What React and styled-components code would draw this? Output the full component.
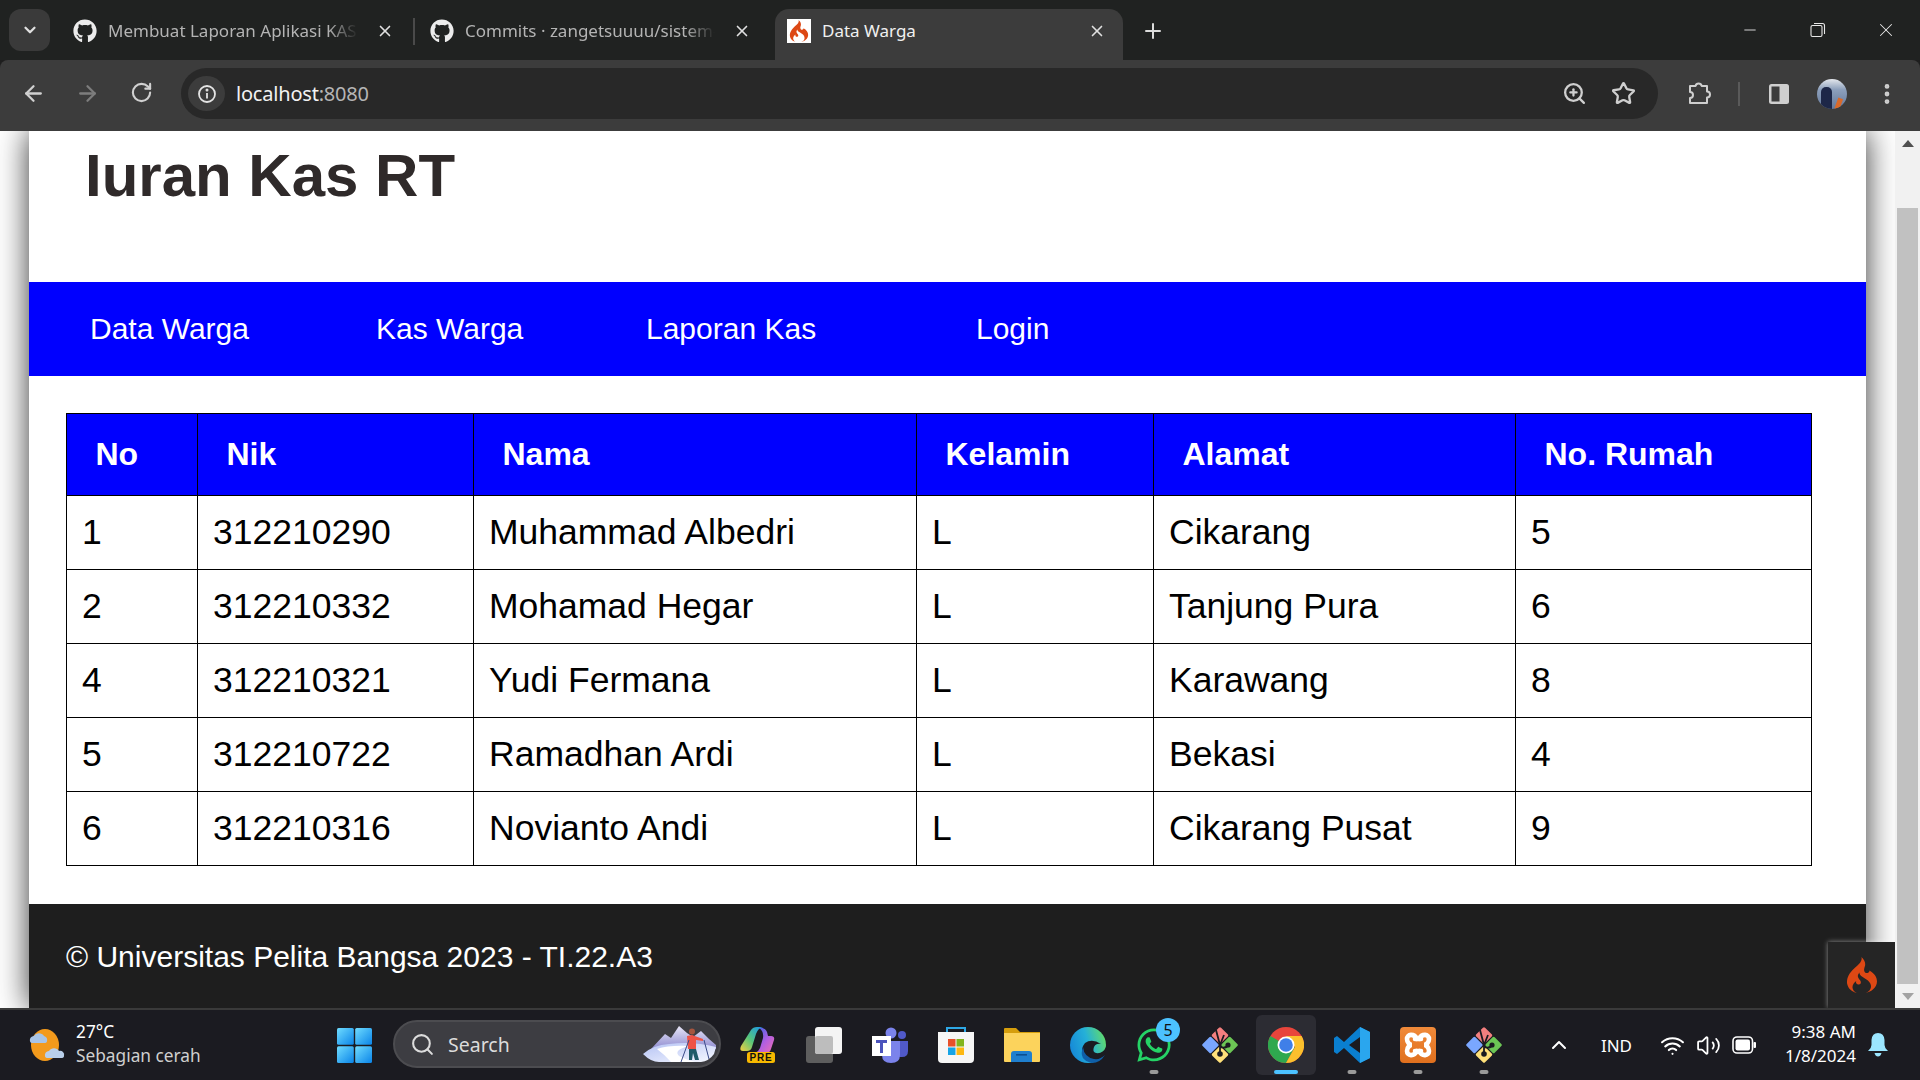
import styled, { createGlobalStyle } from "styled-components";
import { ArrowLeft, ArrowRight, RotateCw, ZoomIn, Star, ChevronDown, ChevronUp, X, Plus, Minus, Search, Wifi, Volume2, EllipsisVertical } from "lucide-react";
import { FaGithub, FaWhatsapp } from "react-icons/fa";
import { SiCodeigniter } from "react-icons/si";

const GlobalStyle = createGlobalStyle`
  html, body {
    margin: 0;
    padding: 0;
    width: 1920px;
    height: 1080px;
    overflow: hidden;
    background: #1e1e1e;
  }
  * {
    box-sizing: border-box;
  }
`;

const chromeFont = `"Noto Sans", "Open Sans", sans-serif`;
const pageFont = `"Liberation Sans", Arial, sans-serif`;

const Screen = styled.div`
  width: 1920px;
  height: 1080px;
  display: flex;
  flex-direction: column;
  overflow: hidden;
`;

/* browser tab strip */
const TabStrip = styled.div`
  height: 60px;
  flex: none;
  background: #202221;
  display: flex;
  align-items: flex-end;
  padding-left: 9px;
  font-family: ${chromeFont};
`;

const TabSearchButton = styled.div`
  width: 41px;
  height: 42px;
  margin-bottom: 9px;
  margin-right: 13px;
  border-radius: 12px;
  background: #3a3a3a;
  color: #e0e0e0;
  display: flex;
  align-items: center;
  justify-content: center;
`;

const Tab = styled.div`
  width: ${(p) => p.$width}px;
  height: 51px;
  flex: none;
  display: flex;
  align-items: center;
  padding: 0 ${(p) => p.$padRight}px 8px ${(p) => p.$pad}px;
  gap: 11px;
  color: ${(p) => (p.$active ? "#f0f0f0" : "#b4b4b4")};
  background: ${(p) => (p.$active ? "#3c3c3c" : "transparent")};
  border-radius: ${(p) => (p.$active ? "14px 14px 0 0" : "0")};
`;

const TabDivider = styled.div`
  width: 2px;
  height: 27px;
  flex: none;
  align-self: flex-start;
  margin-top: 18px;
  background: #4a4a4a;
`;

const TabIcon = styled.div`
  width: 24px;
  height: 24px;
  flex: none;
  display: flex;
  align-items: center;
  justify-content: center;
  color: #ececec;
  background: ${(p) => (p.$light ? "#fff" : "transparent")};
`;

const TabTitle = styled.div`
  flex: 1;
  min-width: 0;
  font-size: 17px;
  white-space: nowrap;
  -webkit-mask-image: ${(p) =>
    p.$active ? "none" : "linear-gradient(to right, #000 calc(100% - 44px), transparent calc(100% - 14px))"};
`;

const TabClose = styled(X)`
  flex: none;
  color: #e0e0e0;
  margin-left: -7px;
`;

const NewTab = styled.div`
  height: 51px;
  width: 40px;
  margin-left: 10px;
  padding-bottom: 8px;
  color: #dcdcdc;
  display: flex;
  align-items: center;
  justify-content: center;
`;

const WindowControls = styled.div`
  margin-left: auto;
  height: 60px;
  display: flex;
  align-items: center;
  color: #e8e8e8;
`;

const WindowButton = styled.div`
  width: 68px;
  display: flex;
  justify-content: center;
`;

/* browser toolbar */
const Toolbar = styled.div`
  height: 71px;
  flex: none;
  background: #3c3c3c;
  border-radius: 8px 8px 0 0;
  display: flex;
  align-items: center;
  padding: 0 0 4px 0;
  color: #cfcfcf;
  font-family: ${chromeFont};
`;

const NavButton = styled.div`
  width: 54px;
  flex: none;
  display: flex;
  justify-content: center;
  color: ${(p) => (p.$muted ? "#7d7d7d" : "#d0d0d0")};
`;

const NavGroup = styled.div`
  display: flex;
  padding-left: 6px;
  width: 181px;
  flex: none;
`;

const AddressBar = styled.div`
  width: 1477px;
  height: 51px;
  flex: none;
  background: #282828;
  border-radius: 26px;
  display: flex;
  align-items: center;
  padding: 0 22px 0 7px;
`;

const SiteInfo = styled.div`
  width: 37px;
  height: 35px;
  flex: none;
  border-radius: 50%;
  background: #3c3c3c;
  color: #e4e4e4;
  display: flex;
  align-items: center;
  justify-content: center;
  margin-right: 11px;
`;

const Url = styled.div`
  flex: 1;
  font-size: 20px;
  letter-spacing: -0.2px;
  color: #e6e6e6;
`;

const Host = styled.span`
  color: #f2f2f2;
`;

const Port = styled.span`
  color: #b5b5b5;
`;

const BarIcons = styled.div`
  display: flex;
  align-items: center;
  gap: 24px;
  color: #cfcfcf;
`;

const ToolIcons = styled.div`
  display: flex;
  align-items: center;
  padding-left: 29px;
  color: #cfcfcf;
`;

const ToolDivider = styled.div`
  width: 2px;
  height: 24px;
  background: #5a5a5a;
  margin: 0 28px 0 26px;
`;

const Avatar = styled.div`
  width: 30px;
  height: 30px;
  border-radius: 50%;
  margin: 0 27px 0 27px;
  background: linear-gradient(180deg, #e4e7ec 0%, #8da0bc 35%, #64789a 100%);
  position: relative;
  overflow: hidden;
`;

const AvatarFigure = styled.div`
  position: absolute;
  left: 4px;
  top: 8px;
  width: 11px;
  height: 24px;
  border-radius: 5px 5px 0 0;
  background: #1d2748;
`;

const AvatarStripe = styled.div`
  position: absolute;
  right: 6px;
  bottom: -2px;
  width: 5px;
  height: 13px;
  background: #d9692a;
  transform: rotate(20deg);
`;

/* page area */
const Viewport = styled.div`
  flex: 1;
  min-height: 0;
  display: flex;
  position: relative;
  background: #fff;
`;

const Gutter = styled.div`
  flex: 1;
  min-width: 0;
  padding-left: 29px;
  padding-right: 29px;
  overflow: hidden;
`;

const Page = styled.div`
  height: 100%;
  background: #fff;
  box-shadow: 0 0 30px rgba(0, 0, 0, 0.8);
  display: flex;
  flex-direction: column;
  font-family: ${pageFont};
`;

const PageHeader = styled.header`
  height: 151px;
  flex: none;
  padding-left: 56px;
`;

const Title = styled.h1`
  margin: 0;
  padding-top: 4px;
  font-size: 60px;
  line-height: 82px;
  font-weight: 700;
  color: #2f2a2a;
`;

const Nav = styled.nav`
  height: 94px;
  flex: none;
  background: #0000ff;
  display: flex;
  align-items: center;
  padding-left: 61px;
`;

const NavLink = styled.a`
  width: ${(p) => p.$width}px;
  flex: none;
  color: #fff;
  font-size: 30px;
`;

const Content = styled.main`
  flex: none;
  padding: 37px 55px 38px 37px;
`;

const Table = styled.table`
  width: 1745px;
  border-collapse: collapse;
  table-layout: fixed;
  border: 1px solid #000;
`;

const HeadCell = styled.th`
  height: 82px;
  padding: 0 0 0 28.5px;
  text-align: left;
  background: #0000ff;
  color: #fff;
  font-size: 32px;
  font-weight: 700;
  border: 1px solid #000;
`;

const Cell = styled.td`
  height: 74px;
  padding: 0 0 1px 15px;
  color: #000;
  font-size: 35.5px;
  border: 1px solid #000;
`;

const Footer = styled.footer`
  flex: 1;
  background: #1e1e1e;
  color: #fff;
  font-size: 30px;
  padding: 36px 0 0 37px;
`;

const CiBadge = styled.div`
  position: absolute;
  right: 25px;
  bottom: 0;
  width: 67px;
  height: 66px;
  background: #252525;
  box-shadow: 0 0 5px rgba(255, 255, 255, 0.5);
  display: flex;
  align-items: center;
  justify-content: center;
  color: #dd4814;
`;

const Scrollbar = styled.div`
  width: 25px;
  flex: none;
  background: #f1f1f1;
  display: flex;
  flex-direction: column;
  align-items: center;
`;

const ScrollArrow = styled.div`
  height: 24px;
  flex: none;
  display: flex;
  align-items: center;
  justify-content: center;
`;

const ScrollTrack = styled.div`
  flex: 1;
  width: 100%;
  padding: 53px 2px 0;
  display: flex;
`;

const ScrollThumb = styled.div`
  flex: 1;
  background: #c1c1c1;
`;

const Triangle = styled.div`
  width: 0;
  height: 0;
  border-left: 6px solid transparent;
  border-right: 6px solid transparent;
  border-${(p) => (p.$up ? "bottom" : "top")}: 7px solid ${(p) => (p.$up ? "#505050" : "#a3a3a3")};
`;

/* windows taskbar */
const Taskbar = styled.div`
  height: 72px;
  flex: none;
  background: #1b1b21;
  border-top: 2px solid #3a3a3a;
  display: flex;
  align-items: center;
  color: #fff;
  font-family: ${chromeFont};
  position: relative;
`;

const Weather = styled.div`
  width: 337px;
  flex: none;
  display: flex;
  align-items: center;
  padding-left: 29px;
  gap: 11px;
`;

const WeatherText = styled.div`
  display: flex;
  flex-direction: column;
  font-size: 17.3px;
  line-height: 24px;
  margin-top: -3px;
`;

const WeatherSub = styled.span`
  color: #cfcfcf;
`;

const StartButton = styled.div`
  width: 56px;
  flex: none;
  display: flex;
`;

const SearchPill = styled.div`
  width: 328px;
  height: 48px;
  flex: none;
  margin-top: -2px;
  background: #3d3d42;
  border: 2px solid #4c4c50;
  border-radius: 24px;
  display: flex;
  align-items: center;
  padding: 0 3px 0 15px;
  gap: 13px;
  color: #dcdcdc;
  font-size: 19.5px;
`;

const SearchLabel = styled.span`
  flex: 1;
`;

const Dock = styled.div`
  display: flex;
  margin-left: 4px;
  height: 100%;
`;

const DockSlot = styled.div`
  width: 66px;
  flex: none;
  display: flex;
  align-items: center;
  justify-content: center;
  padding: 0 3px;
`;

const DockTile = styled.div`
  width: 60px;
  height: 60px;
  display: flex;
  align-items: center;
  justify-content: center;
  position: relative;
  border-radius: 6px;
  background: ${(p) => (p.$active ? "#2c2c33" : "transparent")};
`;

const DockDot = styled.div`
  position: absolute;
  bottom: 1px;
  left: 50%;
  transform: translateX(-50%);
  width: ${(p) => (p.$active ? 24 : 9)}px;
  height: 4px;
  border-radius: 2px;
  background: ${(p) => (p.$active ? "#4cc2ff" : "#9a9a9a")};
`;

const CountBadge = styled.div`
  position: absolute;
  top: 3px;
  right: 4px;
  width: 24px;
  height: 24px;
  border-radius: 50%;
  background: #4cc2ff;
  color: #111;
  font-size: 16px;
  display: flex;
  align-items: center;
  justify-content: center;
`;

const Tray = styled.div`
  margin-left: auto;
  display: flex;
  align-items: center;
  padding-right: 32px;
`;

const TrayChevron = styled.div`
  display: flex;
  margin-right: 30px;
`;

const Lang = styled.div`
  font-size: 17px;
  margin-right: 28px;
`;

const TrayIcons = styled.div`
  display: flex;
  align-items: center;
  gap: 11px;
  margin-right: 29px;
`;

const Clock = styled.div`
  display: flex;
  flex-direction: column;
  align-items: flex-end;
  font-size: 17px;
  line-height: 24px;
  margin-top: -3px;
  margin-right: 12px;
`;

const Flame = () => <SiCodeigniter size={22} color="#dd4814" />;

const WindowsLogo = () => (
  <svg width="35" height="35" viewBox="0 0 35 35">
    <defs>
      <linearGradient id="win" x1="0" y1="0" x2="1" y2="1">
        <stop offset="0" stopColor="#6fdcff" />
        <stop offset="1" stopColor="#0a84e8" />
      </linearGradient>
    </defs>
    <rect x="0" y="0" width="16.8" height="16.8" rx="1.5" fill="url(#win)" />
    <rect x="18.2" y="0" width="16.8" height="16.8" rx="1.5" fill="url(#win)" />
    <rect x="0" y="18.2" width="16.8" height="16.8" rx="1.5" fill="url(#win)" />
    <rect x="18.2" y="18.2" width="16.8" height="16.8" rx="1.5" fill="url(#win)" />
  </svg>
);

const WeatherIcon = () => (
  <svg width="36" height="34" viewBox="0 0 36 34">
    <ellipse cx="16" cy="17" rx="14" ry="16" fill="#f39a1c" />
    <path d="M1 13 a4 4 0 0 1 4-5 a6 6 0 0 1 10 0 a4 4 0 0 1 3 5 q0 2-3 2 H4 q-3 0-3-2z" fill="#a8c4e6" />
    <path d="M16 28 a4 4 0 0 1 4-5 a6 6 0 0 1 10 0 a4 4 0 0 1 5 5 q0 2-3 2 H19 q-3 0-3-2z" fill="#b9cfea" />
  </svg>
);

const SkierArt = () => (
  <svg width="73" height="38" viewBox="0 0 73 38">
    <defs>
      <linearGradient id="peak" x1="0" y1="0" x2="0" y2="1">
        <stop offset="0" stopColor="#e8e6f8" />
        <stop offset="1" stopColor="#8f8cd0" />
      </linearGradient>
      <linearGradient id="snow" x1="0" y1="0" x2="1" y2="1">
        <stop offset="0" stopColor="#b4c2f4" />
        <stop offset="1" stopColor="#f6f8ff" />
      </linearGradient>
    </defs>
    <path d="M8 24 L22 9 L28 13 L36 1 L44 8 L50 12 L58 6 L66 14 L73 20 V24z" fill="url(#peak)" />
    <path d="M0 29 Q10 20 26 19 Q50 16 73 22 L71 29 Q66 36 58 37 H16 Q8 37 0 29z" fill="url(#snow)" />
    <path d="M14 24 Q26 20 46 21 Q30 25 36 31 Q44 35 52 37 H28 Q22 30 14 24z" fill="#fff" />
    <path d="M44 11 l5-1 l11 4 l0 2 l-7-1 l0 9 h-8z" fill="#ee5347" />
    <circle cx="49" cy="6.5" r="3" fill="#a5553f" />
    <path d="M46 24 h7 l3 11 h-4 l-2-7 l-1 7 h-3z" fill="#1e5a68" />
    <path d="M46 15 L38 37 M61 15 L66 34" stroke="#3a4a88" strokeWidth="1" fill="none" />
  </svg>
);

const CopilotIcon = () => (
  <svg width="36" height="36" viewBox="0 0 36 36">
    <defs>
      <linearGradient id="cpa" x1="0" y1="1" x2="1" y2="0">
        <stop offset="0" stopColor="#f5d040" />
        <stop offset="0.45" stopColor="#58c67a" />
        <stop offset="1" stopColor="#1796ee" />
      </linearGradient>
      <linearGradient id="cpb" x1="0" y1="0" x2="1" y2="1">
        <stop offset="0" stopColor="#2f66e6" />
        <stop offset="0.55" stopColor="#b45fe0" />
        <stop offset="1" stopColor="#f070b0" />
      </linearGradient>
    </defs>
    <path d="M11 3 Q13 0 17 0 H23 Q18 1 16 7 L12 20 Q11 24 7 24 H3 Q-1 24 1 19 z" fill="url(#cpa)" />
    <path d="M19 1 Q25 0 27 5 L28 9 H31 Q35 9 34 13 L31 22 Q30 26 26 26 H15 Q19 24 20 21 L23 11 Q24 4 19 1z" fill="url(#cpb)" />
    <rect x="7" y="25" width="28" height="11" rx="2.5" fill="#f7b900" />
    <text x="21" y="34.2" textAnchor="middle" fontSize="10" letterSpacing="0.8" fontWeight="700" fill="#111" fontFamily="Liberation Sans">PRE</text>
  </svg>
);

const TaskViewIcon = () => (
  <svg width="36" height="36" viewBox="0 0 36 36">
    <rect x="0" y="9" width="27" height="27" rx="3" fill="#5e5e5e" />
    <rect x="9" y="0" width="27" height="27" rx="3" fill="#f4f4f4" />
    <rect x="9" y="9" width="18" height="18" rx="2" fill="#bdbdbd" />
  </svg>
);

const TeamsIcon = () => (
  <svg width="36" height="36" viewBox="0 0 36 36">
    <circle cx="19" cy="6" r="5.5" fill="#7b83eb" />
    <circle cx="30" cy="8" r="4" fill="#5059c9" />
    <path d="M26 14 h10 v10 q0 6-6 6 l-4 0z" fill="#5059c9" />
    <path d="M10 14 h18 v14 q0 8-9 8 q-9 0-9-8z" fill="#7b83eb" />
    <rect x="0" y="9" width="19" height="20" fill="#fff" />
    <path d="M4 13 h11 v3 h-4 v10 h-3 v-10 h-4z" fill="#4b53bc" />
  </svg>
);

const StoreIcon = () => (
  <svg width="36" height="36" viewBox="0 0 36 36">
    <path d="M9 8 V1 h18 v7" fill="none" stroke="#2ea8e6" strokeWidth="2" />
    <path d="M0 5 h36 v27 q0 4-4 4 H4 q-4 0-4-4z" fill="#f6f6f6" />
    <rect x="10" y="12" width="7.5" height="7.5" fill="#e8502a" />
    <rect x="18.5" y="12" width="7.5" height="7.5" fill="#82b51e" />
    <rect x="10" y="20.5" width="7.5" height="7.5" fill="#16a4e6" />
    <rect x="18.5" y="20.5" width="7.5" height="7.5" fill="#fdb812" />
  </svg>
);

const FolderIcon = () => (
  <svg width="36" height="36" viewBox="0 0 36 36">
    <path d="M0 2 q0-1 1-1 h11 l4 4 h20 v6 H0z" fill="#d69e0c" />
    <path d="M0 6 h36 v28 q0 1-1 1 H1 q-1 0-1-1z" fill="#fcd35c" />
    <path d="M7 35 v-8 q0-3 3-3 h15 q3 0 3 3 v8z" fill="#1f7fce" />
    <rect x="12" y="27" width="11" height="1.6" fill="#0c4f90" />
  </svg>
);

const EdgeIcon = () => (
  <svg width="36" height="36" viewBox="0 0 36 36">
    <defs>
      <linearGradient id="edgeA" x1="0" y1="0.6" x2="1" y2="0.3">
        <stop offset="0" stopColor="#1689d8" />
        <stop offset="0.5" stopColor="#25b0d8" />
        <stop offset="1" stopColor="#62dc6a" />
      </linearGradient>
    </defs>
    <circle cx="18" cy="18" r="18" fill="url(#edgeA)" />
    <path d="M36 20 Q33 27 26 26 Q22 25 24 20 Q26 16 31 17 Q22 11 15 16 Q10 22 13 28 Q18 35 27 34 Q33 31 36 24z" fill="#1b1b21" />
    <path d="M13 20 Q8 33 22 36 Q30 36 35 28 Q30 33 24 32 Q14 30 13 20z" fill="#0f5fa8" />
  </svg>
);

const GitIcon = () => (
  <svg width="36" height="36" viewBox="0 0 36 36">
    <g transform="rotate(45 18 18)">
      <rect x="5" y="5" width="12.4" height="12.4" rx="1.5" fill="#f47f7f" />
      <rect x="18.6" y="5" width="12.4" height="12.4" rx="1.5" fill="#6cc655" />
      <rect x="18.6" y="18.6" width="12.4" height="12.4" rx="1.5" fill="#ffe07a" />
      <rect x="5" y="18.6" width="12.4" height="12.4" rx="1.5" fill="#7aa7ff" />
    </g>
    <path d="M14 3 L18 18 M22 8 L18 18 M18 18 L18 26 M18 20 Q24 22 26 18" stroke="#1b1b21" strokeWidth="1.8" fill="none" />
    <circle cx="18" cy="27" r="2.8" fill="#1b1b21" />
    <circle cx="26" cy="18" r="2.6" fill="#1b1b21" />
  </svg>
);

const ChromeIcon = () => (
  <svg width="36" height="36" viewBox="0 0 36 36">
    <circle cx="18" cy="18" r="18" fill="#e8453c" />
    <path d="M18 18 L2.4 9 A18 18 0 0 0 18 36 L27 20z" fill="#2fa84f" />
    <path d="M18 36 A18 18 0 0 0 33.6 9 L18 9 L27 20z" fill="#fbc02d" />
    <circle cx="18" cy="18" r="8.5" fill="#fff" />
    <circle cx="18" cy="18" r="6.8" fill="#3f7fe8" />
  </svg>
);

const VsCodeIcon = () => (
  <svg width="36" height="36" viewBox="0 0 36 36">
    <path d="M26 0 L36 5 V31 L26 36 L10 21 L3 27 L0 25 V11 L3 9 L10 15z M26 10 L15 18 L26 26z" fill="#0a7fd0" fillRule="evenodd" />
    <path d="M26 0 L36 5 V31 L26 36z" fill="#2aa6ee" />
  </svg>
);

const XamppIcon = () => (
  <svg width="36" height="36" viewBox="0 0 36 36">
    <defs>
      <linearGradient id="xamppBg" x1="0" y1="0" x2="0" y2="1">
        <stop offset="0" stopColor="#f08a3a" />
        <stop offset="1" stopColor="#e0701e" />
      </linearGradient>
    </defs>
    <rect width="36" height="36" rx="4" fill="url(#xamppBg)" />
    <path
      d="M17 12 C14 6 7 7 7 12 C7 16 10 18 12 18 C10 18 7 20 7 24 C7 29 14 30 17 24 M19 12 C22 6 29 7 29 12 C29 16 26 18 24 18 C26 18 29 20 29 24 C29 29 22 30 19 24 M15 12 H21 M15 24 H21"
      fill="none"
      stroke="#fff"
      strokeWidth="4.6"
      strokeLinecap="round"
    />
  </svg>
);

const BatteryIcon = () => (
  <svg width="24" height="18" viewBox="0 0 24 18">
    <rect x="1" y="1" width="19.5" height="16" rx="4" fill="none" stroke="#fff" strokeWidth="1.6" />
    <rect x="3.5" y="3.5" width="14.5" height="11" rx="2" fill="#fff" />
    <rect x="21.5" y="6" width="2.5" height="6" rx="1" fill="#fff" />
  </svg>
);

const BellIcon = () => (
  <svg width="20" height="24" viewBox="0 0 20 24">
    <path d="M10 0 q6 0 6.5 7 v5 q0 3 3.5 6 H0 q3.5-3 3.5-6 V7 Q4 0 10 0z" fill="#9be6ff" />
    <path d="M6.5 20 h7 q-1 3.5-3.5 3.5 T6.5 20z" fill="#9be6ff" />
  </svg>
);

const InfoIcon = () => (
  <svg width="20" height="20" viewBox="0 0 20 20" fill="none" stroke="currentColor" strokeWidth="1.8">
    <circle cx="10" cy="10" r="8" />
    <path d="M10 9 v5.5" />
    <circle cx="10" cy="6" r="0.6" fill="currentColor" />
  </svg>
);

const PuzzleIcon = () => (
  <svg width="25" height="25" viewBox="0 0 25 25" fill="none" stroke="currentColor" strokeWidth="2" strokeLinejoin="round">
    <path d="M3 5 h5.5 a3.2 3.2 0 0 1 6.2 0 H20 v5.5 a3 3 0 0 1 0 6 V22 H3 v-5 a3 3 0 0 0 0-6z" />
  </svg>
);

const SidePanelIcon = () => (
  <svg width="22" height="22" viewBox="0 0 22 22">
    <rect x="1" y="1" width="20" height="20" rx="2.5" fill="#cfcfcf" />
    <rect x="3.5" y="3.5" width="8" height="15" fill="#3c3c3c" />
  </svg>
);

const RestoreIcon = () => (
  <svg width="16" height="16" viewBox="0 0 16 16" fill="none" stroke="currentColor" strokeWidth="1.1">
    <rect x="1" y="3.5" width="11" height="11" rx="1.5" />
    <path d="M4 1.5 h8.5 q2 0 2 2 v8.5" />
  </svg>
);

const rows = [
  ["1", "312210290", "Muhammad Albedri", "L", "Cikarang", "5"],
  ["2", "312210332", "Mohamad Hegar", "L", "Tanjung Pura", "6"],
  ["4", "312210321", "Yudi Fermana", "L", "Karawang", "8"],
  ["5", "312210722", "Ramadhan Ardi", "L", "Bekasi", "4"],
  ["6", "312210316", "Novianto Andi", "L", "Cikarang Pusat", "9"],
];

const heads = [
  ["No", 131],
  ["Nik", 276],
  ["Nama", 443],
  ["Kelamin", 237],
  ["Alamat", 362],
  ["No. Rumah", 296],
];

const links = [
  ["Data Warga", 286],
  ["Kas Warga", 270],
  ["Laporan Kas", 330],
  ["Login", 200],
];

const dockIcons = [
  [<CopilotIcon key="a" />],
  [<TaskViewIcon key="a" />],
  [<TeamsIcon key="a" />],
  [<StoreIcon key="a" />],
  [<FolderIcon key="a" />],
  [<EdgeIcon key="a" />],
  [<FaWhatsapp key="a" size={38} color="#25d366" />, "dot", "5"],
  [<GitIcon key="a" />],
  [<ChromeIcon key="a" />, "active"],
  [<VsCodeIcon key="a" />, "dot"],
  [<XamppIcon key="a" />, "dot"],
  [<GitIcon key="a" />, "dot"],
];

export default function App() {
  return (
    <Screen>
      <GlobalStyle />
      <TabStrip>
        <TabSearchButton>
          <ChevronDown size={18} strokeWidth={3} />
        </TabSearchButton>
        <Tab $width={350} $pad={10} $padRight={19}>
          <TabIcon>
            <FaGithub size={24} />
          </TabIcon>
          <TabTitle>Membuat Laporan Aplikasi KAS</TabTitle>
          <TabClose size={18} strokeWidth={2.2} />
        </Tab>
        <TabDivider />
        <Tab $width={360} $pad={15} $padRight={24}>
          <TabIcon>
            <FaGithub size={24} />
          </TabIcon>
          <TabTitle>Commits · zangetsuuuu/sistem-</TabTitle>
          <TabClose size={18} strokeWidth={2.2} />
        </Tab>
        <Tab $width={348} $pad={12} $padRight={17} $active>
          <TabIcon $light>
            <Flame />
          </TabIcon>
          <TabTitle $active>Data Warga</TabTitle>
          <TabClose size={18} strokeWidth={2.2} />
        </Tab>
        <NewTab>
          <Plus size={24} strokeWidth={2} />
        </NewTab>
        <WindowControls>
          <WindowButton>
            <Minus size={18} strokeWidth={1.2} />
          </WindowButton>
          <WindowButton>
            <RestoreIcon />
          </WindowButton>
          <WindowButton>
            <X size={22} strokeWidth={1.1} />
          </WindowButton>
        </WindowControls>
      </TabStrip>

      <Toolbar>
        <NavGroup>
          <NavButton>
            <ArrowLeft size={25} strokeWidth={2.2} />
          </NavButton>
          <NavButton $muted>
            <ArrowRight size={25} strokeWidth={2.2} />
          </NavButton>
          <NavButton>
            <RotateCw size={23} strokeWidth={2.2} />
          </NavButton>
        </NavGroup>
        <AddressBar>
          <SiteInfo>
            <InfoIcon />
          </SiteInfo>
          <Url>
            <Host>localhost</Host>
            <Port>:8080</Port>
          </Url>
          <BarIcons>
            <ZoomIn size={25} strokeWidth={2.2} />
            <Star size={25} strokeWidth={2.2} />
          </BarIcons>
        </AddressBar>
        <ToolIcons>
          <PuzzleIcon />
          <ToolDivider />
          <SidePanelIcon />
          <Avatar>
            <AvatarFigure />
            <AvatarStripe />
          </Avatar>
          <EllipsisVertical size={26} strokeWidth={2.4} />
        </ToolIcons>
      </Toolbar>

      <Viewport>
        <Gutter>
          <Page>
            <PageHeader>
              <Title>Iuran Kas RT</Title>
            </PageHeader>
            <Nav>
              {links.map(([label, width]) => (
                <NavLink key={label} $width={width}>
                  {label}
                </NavLink>
              ))}
            </Nav>
            <Content>
              <Table>
                <colgroup>
                  {heads.map(([label, width]) => (
                    <col key={label} width={width} />
                  ))}
                </colgroup>
                <thead>
                  <tr>
                    {heads.map(([label]) => (
                      <HeadCell key={label}>{label}</HeadCell>
                    ))}
                  </tr>
                </thead>
                <tbody>
                  {rows.map((row) => (
                    <tr key={row[1]}>
                      {row.map((value, i) => (
                        <Cell key={i}>{value}</Cell>
                      ))}
                    </tr>
                  ))}
                </tbody>
              </Table>
            </Content>
            <Footer>© Universitas Pelita Bangsa 2023 - TI.22.A3</Footer>
          </Page>
        </Gutter>
        <Scrollbar>
          <ScrollArrow>
            <Triangle $up />
          </ScrollArrow>
          <ScrollTrack>
            <ScrollThumb />
          </ScrollTrack>
          <ScrollArrow>
            <Triangle />
          </ScrollArrow>
        </Scrollbar>
        <CiBadge>
          <SiCodeigniter size={36} />
        </CiBadge>
      </Viewport>

      <Taskbar>
        <Weather>
          <WeatherIcon />
          <WeatherText>
            <span>27°C</span>
            <WeatherSub>Sebagian cerah</WeatherSub>
          </WeatherText>
        </Weather>
        <StartButton>
          <WindowsLogo />
        </StartButton>
        <SearchPill>
          <Search size={25} strokeWidth={2} />
          <SearchLabel>Search</SearchLabel>
          <SkierArt />
        </SearchPill>
        <Dock>
          {dockIcons.map(([icon, state, badge], i) => (
            <DockSlot key={i}>
              <DockTile $active={state === "active"}>
                {icon}
                {state && <DockDot $active={state === "active"} />}
                {badge && <CountBadge>{badge}</CountBadge>}
              </DockTile>
            </DockSlot>
          ))}
        </Dock>
        <Tray>
          <TrayChevron>
            <ChevronUp size={24} strokeWidth={2} />
          </TrayChevron>
          <Lang>IND</Lang>
          <TrayIcons>
            <Wifi size={25} strokeWidth={2} />
            <Volume2 size={25} strokeWidth={1.7} />
            <BatteryIcon />
          </TrayIcons>
          <Clock>
            <span>9:38 AM</span>
            <span>1/8/2024</span>
          </Clock>
          <BellIcon />
        </Tray>
      </Taskbar>
    </Screen>
  );
}
